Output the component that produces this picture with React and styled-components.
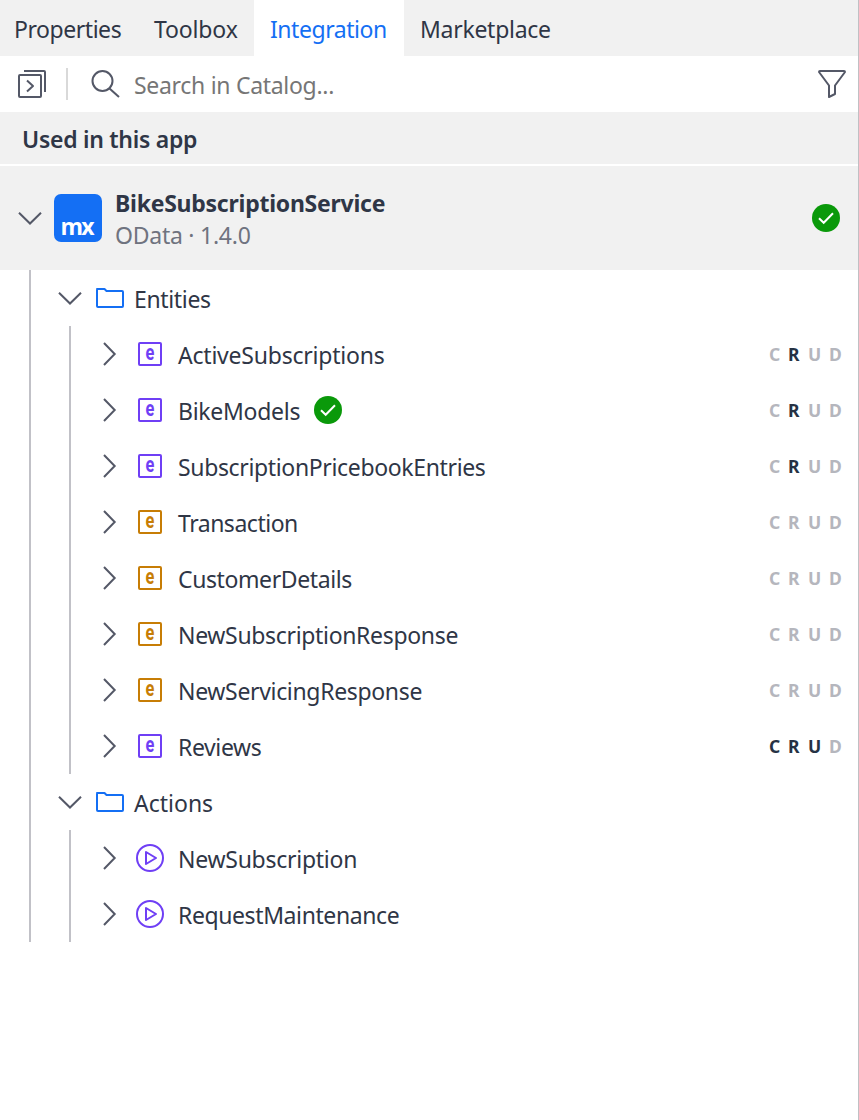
import React from 'react';
import styled, { createGlobalStyle } from 'styled-components';

const GlobalStyle = createGlobalStyle`
  * { box-sizing: border-box; }
  body { margin: 0; background: #fff; }
  svg { display: block; flex: none; overflow: visible; }
`;

const Panel = styled.main`
  width: 859px;
  height: 1120px;
  overflow: hidden;
  border-right: 1px solid #c0c0c4;
  background: #fff;
  color: #2f3646;
  font-family: 'Noto Sans', 'Open Sans', sans-serif;
  font-size: 23px;
  line-height: 32px;
`;

const Label = styled.span`
  display: block;
  padding-top: ${(p) => (p.$drop ?? 2)}px;
  white-space: pre;
  letter-spacing: ${(p) => p.$track || 0}px;
`;

const TabBar = styled.nav`
  display: flex;
  height: 56px;
  background: #f1f1f1;
`;

const Tab = styled.div`
  display: flex;
  align-items: center;
  width: ${(p) => p.$width}px;
  padding-left: ${(p) => p.$inset || 16}px;
  background: ${(p) => (p.$active ? '#fff' : 'transparent')};
  color: ${(p) => (p.$active ? '#146ff4' : 'inherit')};
`;

const Toolbar = styled.div`
  display: flex;
  align-items: center;
  height: 56px;
  padding: 0 10px 0 16px;
  color: #545867;
`;

const Divider = styled.div`
  width: 2px;
  height: 32px;
  margin: 0 22px 0 18px;
  background: #d9d9d9;
`;

const SearchField = styled.div`
  flex: 1;
  margin-left: 14px;
  color: #767676;
`;

const SectionTitle = styled.h2`
  display: flex;
  align-items: center;
  height: 54px;
  margin: 0;
  padding-left: 22px;
  border-bottom: 2px solid #fff;
  background: #f1f1f1;
  font-size: 23px;
  font-weight: 600;
`;

const Service = styled.header`
  display: flex;
  align-items: center;
  height: 104px;
  padding: 0 18px 0 16px;
  background: #f1f1f1;
`;

const Logo = styled.div`
  display: flex;
  justify-content: center;
  width: 48px;
  height: 48px;
  margin: 0 13px 0 10px;
  padding: 16px 3px 0 0;
  border-radius: 7px;
  background: #146ff4;
  color: #fff;
  font: 700 23px/32px 'Open Sans', 'Noto Sans', sans-serif;
  letter-spacing: -2px;
`;

const ServiceText = styled.div`
  flex: 1;
  padding-top: 2px;
`;

const ServiceName = styled.div`
  font-weight: 700;
`;

const ServiceMeta = styled.div`
  color: #6f737f;
`;

const Tree = styled.div`
  margin-left: 29px;
  border-left: 2px solid #c1c1c7;
`;

const Branch = styled.div`
  margin-left: 38px;
  border-left: 2px solid #c1c1c7;
`;

const FolderRow = styled.div`
  display: flex;
  align-items: center;
  height: 56px;
  padding-left: 25px;
`;

const FolderCell = styled.div`
  margin: 0 10px 0 12px;
`;

const ItemRow = styled.div`
  display: flex;
  align-items: center;
  height: 56px;
  padding: 0 15px 0 25px;
`;

const IconCell = styled.div`
  display: flex;
  justify-content: center;
  width: 28px;
  margin: 0 14px 0 12px;
`;

const StatusCell = styled.div`
  margin-left: 14px;
`;

const Crud = styled.div`
  display: flex;
  margin-left: auto;
  font-size: 17.5px;
  font-weight: 700;
  line-height: 24px;
`;

const CrudLetter = styled.span`
  width: ${(p) => p.$width}px;
  color: ${(p) => (p.$on ? '#263244' : '#b5b6bd')};
`;

const Chevron = ({ open }) => (
  <svg width="28" height="28" viewBox="0 0 28 28" fill="none" stroke="#545867" strokeWidth="2">
    <path d={open ? 'M3 8.8 14 19.5 25 8.8' : 'M8 3 18.7 14 8 25'} />
  </svg>
);

const Check = () => (
  <svg width="28" height="28" viewBox="0 0 28 28" fill="none">
    <circle cx="14" cy="14" r="14" fill="#0a990a" />
    <path d="M7 14.2 11.7 18.8 21 9.2" stroke="#fff" strokeWidth="2" />
  </svg>
);

const Folder = () => (
  <svg width="28" height="28" viewBox="0 0 28 28" fill="none" stroke="#146ff4" strokeWidth="2" strokeLinejoin="round">
    <path d="M1 5H8.5L10.5 7H26Q27 7 27 8V22Q27 23 26 23H2Q1 23 1 22V6Q1 5 2 5Z" />
  </svg>
);

const Entity = ({ color }) => (
  <svg width="24" height="24" viewBox="0 0 24 24">
    <rect x="1" y="1" width="22" height="22" rx="1" fill="none" stroke={color} strokeWidth="2" />
    <text transform="translate(12 18) scale(.76 1)" textAnchor="middle" fill={color} fontFamily="Roboto, sans-serif" fontWeight="700" fontSize="21.5">e</text>
  </svg>
);

const Action = () => (
  <svg width="28" height="28" viewBox="0 0 28 28" fill="none" stroke="#6f3ff5" strokeWidth="2" strokeLinejoin="round">
    <circle cx="14" cy="14" r="13" />
    <path d="M10 8 20 14 10 20Z" />
  </svg>
);

const Collapse = () => (
  <svg width="32" height="32" viewBox="0 0 32 32" fill="none" stroke="currentColor" strokeWidth="2" strokeLinejoin="round">
    <rect x="3" y="7" width="22" height="22" rx="1" />
    <path d="M8 3H28Q29 3 29 4V24M11 12.5 17 18 11 23.5" />
  </svg>
);

const Search = () => (
  <svg width="30" height="32" viewBox="0 0 30 32" fill="none" stroke="currentColor" strokeWidth="2">
    <circle cx="12.5" cy="13" r="10" />
    <path d="M19.5 20.5 29 29" />
  </svg>
);

const Funnel = () => (
  <svg width="32" height="32" viewBox="0 0 32 32" fill="none" stroke="currentColor" strokeWidth="2" strokeLinejoin="round">
    <path d="M4 3H28Q29 3 29 4L19 17.5V26L13 29V17.5L3 4Q3 3 4 3Z" />
  </svg>
);

const PURPLE = '#6f3ff5';
const ORANGE = '#c77d05';

const entities = [
  { name: 'ActiveSubscriptions', color: PURPLE, on: 'R', track: -0.22 },
  { name: 'BikeModels', color: PURPLE, on: 'R', checked: true, track: -0.28 },
  { name: 'SubscriptionPricebookEntries', color: PURPLE, on: 'R', track: -0.35 },
  { name: 'Transaction', color: ORANGE, on: '', track: -0.48 },
  { name: 'CustomerDetails', color: ORANGE, on: '', track: -0.4 },
  { name: 'NewSubscriptionResponse', color: ORANGE, on: '', track: -0.33 },
  { name: 'NewServicingResponse', color: ORANGE, on: '', track: -0.33 },
  { name: 'Reviews', color: PURPLE, on: 'CRU', track: -0.38 },
];

const actions = [
  { name: 'NewSubscription', track: -0.26 },
  { name: 'RequestMaintenance', track: -0.4 },
];

const letters = [['C', 19], ['R', 20], ['U', 21], ['D', 14]];

const Permissions = ({ on }) => (
  <Crud>
    {letters.map(([l, w]) => (
      <CrudLetter key={l} $width={w} $on={on.includes(l)}>{l}</CrudLetter>
    ))}
  </Crud>
);

const FolderHeading = ({ name, track }) => (
  <FolderRow>
    <Chevron open />
    <FolderCell><Folder /></FolderCell>
    <Label $track={track}>{name}</Label>
  </FolderRow>
);

export default function App() {
  return (
    <>
      <GlobalStyle />
      <Panel>
        <TabBar>
          <Tab $width={138} $inset={14}><Label $track={-0.45}>Properties</Label></Tab>
          <Tab $width={116}><Label $track={-0.15}>Toolbox</Label></Tab>
          <Tab $width={150} $active><Label $track={-0.45}>Integration</Label></Tab>
          <Tab $width={180}><Label $track={-0.28}>Marketplace</Label></Tab>
        </TabBar>
        <Toolbar>
          <Collapse />
          <Divider />
          <Search />
          <SearchField><Label $track={-0.3}>Search in Catalog...</Label></SearchField>
          <Funnel />
        </Toolbar>
        <SectionTitle><Label $track={-0.28}>Used in this app</Label></SectionTitle>
        <Service>
          <Chevron open />
          <Logo>mx</Logo>
          <ServiceText>
            <ServiceName><Label $drop={0} $track={-0.25}>BikeSubscriptionService</Label></ServiceName>
            <ServiceMeta><Label $drop={0} $track={-0.25}>OData · 1.4.0</Label></ServiceMeta>
          </ServiceText>
          <Check />
        </Service>
        <Tree>
          <FolderHeading name="Entities" track={-0.35} />
          <Branch>
            {entities.map((e) => (
              <ItemRow key={e.name}>
                <Chevron />
                <IconCell><Entity color={e.color} /></IconCell>
                <Label $track={e.track}>{e.name}</Label>
                {e.checked && <StatusCell><Check /></StatusCell>}
                <Permissions on={e.on} />
              </ItemRow>
            ))}
          </Branch>
          <FolderHeading name="Actions" track={0} />
          <Branch>
            {actions.map((a) => (
              <ItemRow key={a.name}>
                <Chevron />
                <IconCell><Action /></IconCell>
                <Label $track={a.track}>{a.name}</Label>
              </ItemRow>
            ))}
          </Branch>
        </Tree>
      </Panel>
    </>
  );
}
